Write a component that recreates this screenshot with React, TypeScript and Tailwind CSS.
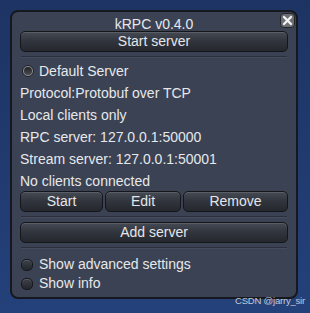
import React from 'react'

const btn =
  'flex items-center justify-center h-[21px] rounded-[5px] border border-[#14161a] bg-gradient-to-b from-[#454a54] via-[#30343c] to-[#25282e] shadow-[inset_0_1px_0_rgba(255,255,255,0.12)] text-[14px] text-[#e4e6ea]'

function Separator() {
  return <div className="mx-[1px] h-[2px] bg-[#2a2f3b] border-b border-[#454c5d]" />
}

function Check({ label }: { label: string }) {
  return (
    <div className="h-[19px] flex items-center gap-[6px]">
      <span className="ml-[1px] w-[12px] h-[12px] rounded-[5px] border border-[#16181c] bg-gradient-to-b from-[#3d4149] to-[#24272d] shadow-[inset_0_1px_0_rgba(255,255,255,0.15)]" />
      <span>{label}</span>
    </div>
  )
}

export default function App() {
  const lines = [
    'Protocol:Protobuf over TCP',
    'Local clients only',
    'RPC server: 127.0.0.1:50000',
    'Stream server: 127.0.0.1:50001',
    'No clients connected',
  ]

  return (
    <div
      className="relative w-[310px] h-[313px] overflow-hidden bg-gradient-to-b from-[#1d3463] to-[#24417b] pt-[10px] pl-[10px]"
      style={{ fontFamily: '"Liberation Sans", Arial, sans-serif' }}
    >
      <div className="w-[288px] h-[289px] rounded-[8px] border-2 border-[#15181e] bg-[#3b4253] px-[8px] text-[14px] text-[#e6e8ec]">
        {/* header */}
        <div className="relative h-[19px] flex items-center justify-center">
          <span className="leading-none mt-[4px]">kRPC v0.4.0</span>
          <div className="absolute right-[-7px] top-[1px] w-[15px] h-[15px] rounded-[4px] bg-[#6b6e74] border border-[#222428] flex items-center justify-center">
            <svg width="11" height="11" viewBox="0 0 11 11">
              <path d="M2 2 L9 9 M9 2 L2 9" stroke="#f2f2f2" strokeWidth="2.4" strokeLinecap="round" />
            </svg>
          </div>
        </div>

        <div className={btn}>Start server</div>
        <div className="mt-[4px]">
          <Separator />
        </div>

        <div className="mt-[1px]">
          <div className="h-[22px] pt-[2px] flex items-center gap-[5px]">
            <span className="ml-[2px] w-[12px] h-[12px] rounded-full bg-[#8e9196] border border-[#1b1d22] flex items-center justify-center">
              <span className="w-[8px] h-[8px] rounded-full bg-gradient-to-b from-[#222326] to-[#4a4c50]" />
            </span>
            <span>Default Server</span>
          </div>
          {lines.map((l) => (
            <div key={l} className="h-[22px] pt-[2px] flex items-center">
              {l}
            </div>
          ))}
        </div>

        <div className="flex gap-[2px]">
          <div className={btn + ' w-[83px]'}>Start</div>
          <div className={btn + ' w-[76px]'}>Edit</div>
          <div className={btn + ' flex-1'}>Remove</div>
        </div>
        <div className="mt-[4px]">
          <Separator />
        </div>
        <div className={btn + ' mt-[4px]'}>Add server</div>
        <div className="mt-[4px]">
          <Separator />
        </div>
        <div className="mt-[6px]">
          <Check label="Show advanced settings" />
          <Check label="Show info" />
        </div>
      </div>

      <div className="absolute right-[5px] top-[294px] text-[9.5px] text-[#c3c9d4] tracking-[-0.2px]">
        CSDN @jarry_sir
      </div>
    </div>
  )
}
